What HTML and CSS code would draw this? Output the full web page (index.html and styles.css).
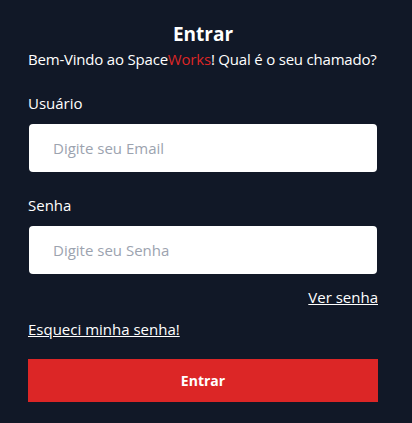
FILE: index.html
```html
<!DOCTYPE html>
<html lang="pt-BR">
<head>
<meta charset="utf-8">
<link rel="stylesheet" href="styles.css">
</head>
<body>
<main class="login">
  <h1 class="title">Entrar</h1>
  <p class="subtitle">Bem-Vindo ao Space<span class="accent">Works</span>! Qual é o seu chamado?</p>
  <label class="label" for="email">Usuário</label>
  <input class="field" id="email" type="text" placeholder="Digite seu Email">
  <label class="label label-senha" for="senha">Senha</label>
  <input class="field" id="senha" type="password" placeholder="Digite seu Senha">
  <div class="show-row"><a class="link" href="#">Ver senha</a></div>
  <div class="forgot-row"><a class="link" href="#">Esqueci minha senha!</a></div>
  <button class="submit" type="button">Entrar</button>
</main>
</body>
</html>
```
FILE: styles.css
```css
html, body {
  margin: 0;
  padding: 0;
  background: #111827;
  height: 100%;
}
body {
  font-family: "Open Sans", "Noto Sans", sans-serif;
  color: #ffffff;
}
.login {
  display: flex;
  flex-direction: column;
  padding: 21px 34px 0 28px;
}
.title {
  margin: 0;
  text-align: center;
  font-size: 19px;
  font-weight: 700;
  line-height: 26px;
}
.subtitle {
  margin: 2px 0 0;
  font-size: 15px;
  line-height: 20px;
  letter-spacing: -0.2px;
  white-space: nowrap;
}
.accent { color: #dc2626; }
.label {
  margin-top: 24px;
  font-size: 15px;
  line-height: 20px;
}
.label-senha { margin-top: 23px; }
.field {
  margin: 11px 1px 0;
  height: 48px;
  box-sizing: border-box;
  border: none;
  border-radius: 4px;
  background: #ffffff;
  padding: 0 24px;
  font-family: inherit;
  font-size: 15px;
  color: #111827;
}
.field::placeholder { color: #9ca3af; }
.show-row {
  display: flex;
  justify-content: flex-end;
  margin-top: 13px;
}
.forgot-row {
  display: flex;
  margin-top: 12px;
}
.link {
  color: #ffffff;
  font-size: 15px;
  line-height: 20px;
  text-decoration: underline;
}
.submit {
  margin-top: 20px;
  height: 43px;
  border: none;
  background: #dc2626;
  color: #ffffff;
  font-family: inherit;
  font-size: 14px;
  font-weight: 700;
}
```
